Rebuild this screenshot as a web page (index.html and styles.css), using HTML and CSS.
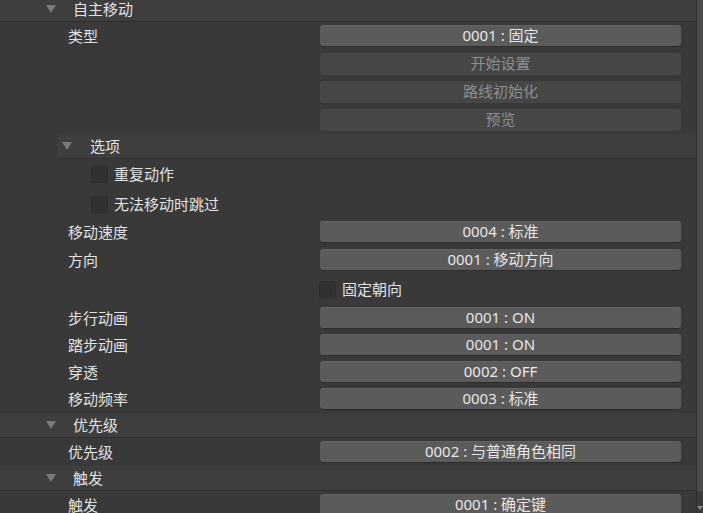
FILE: index.html
```html
<!DOCTYPE html>
<html lang="zh-CN">
  <head>
    <meta charset="UTF-8" />
    <meta name="viewport" content="width=device-width, initial-scale=1.0" />
    <title>事件属性</title>
    <link rel="stylesheet" href="styles.css">
  </head>
  <body>
    <div class="window">
      <div class="panel">
        <!-- 自主移动 -->
        <div class="group-head first"><span class="tri"></span><span>自主移动</span></div>

        <div class="row r-top"><span class="label">类型</span><button class="field">0001 : 固定</button></div>
        <div class="row"><span class="label"></span><button class="field off">开始设置</button></div>
        <div class="row"><span class="label"></span><button class="field off">路线初始化</button></div>
        <div class="row"><span class="label"></span><button class="field off">预览</button></div>

        <div class="group-head sub"><span class="tri"></span><span>选项</span></div>
        <div class="check-row c1"><span class="box"></span><span>重复动作</span></div>
        <div class="check-row c2"><span class="box"></span><span>无法移动时跳过</span></div>

        <div class="row r-speed"><span class="label">移动速度</span><button class="field">0004 : 标准</button></div>
        <div class="row"><span class="label">方向</span><button class="field">0001 : 移动方向</button></div>
        <div class="check-row c3"><span class="box"></span><span>固定朝向</span></div>
        <div class="row r-walk"><span class="label">步行动画</span><button class="field">0001 : ON</button></div>
        <div class="row tight"><span class="label">踏步动画</span><button class="field">0001 : ON</button></div>
        <div class="row tight"><span class="label">穿透</span><button class="field">0002 : OFF</button></div>
        <div class="row tight"><span class="label">移动频率</span><button class="field">0003 : 标准</button></div>

        <!-- 优先级 -->
        <div class="group-head"><span class="tri"></span><span>优先级</span></div>
        <div class="row r-top"><span class="label">优先级</span><button class="field">0002 : 与普通角色相同</button></div>

        <!-- 触发 -->
        <div class="group-head"><span class="tri"></span><span>触发</span></div>
        <div class="row r-top"><span class="label">触发</span><button class="field">0001 : 确定键</button></div>
      </div>

      <div class="scrollbar">
        <div class="thumb"></div>
        <span class="arrow"></span>
      </div>
    </div>
  </body>
</html>
```

FILE: styles.css
```css
html, body {
  margin: 0;
  height: 100%;
  overflow: hidden;
}

body {
  background-color: #393939;
  font-family: "Noto Sans", "Noto Sans CJK SC", sans-serif;
  font-size: 15px;
  color: #e2e2e2;
}

.window {
  display: flex;
  height: 513px;
}

.panel {
  width: 696px;
  border-right: 1px solid #2e2e2e;
  overflow: hidden;
}

.group-head {
  display: flex;
  align-items: center;
  height: 24px;
  margin-top: 3px;
  padding-left: 46px;
  background-color: #3e3e3e;
  border-bottom: 1px solid #2f2f2f;
  line-height: 22px;
}

.group-head.first {
  margin-top: -3px;
}

.group-head .tri {
  width: 0;
  height: 0;
  border-left: 5.5px solid transparent;
  border-right: 5.5px solid transparent;
  border-top: 8px solid #7a7a7a;
  margin-right: 17px;
}

.group-head.sub {
  margin-left: 58px;
  padding-left: 4px;
}

.group-head.sub .tri {
  border-left-width: 5px;
  border-right-width: 5px;
  margin-right: 18px;
}

.row {
  display: flex;
  align-items: center;
  height: 22px;
  margin-top: 6px;
}

.row.r-top {
  margin-top: 3px;
}

.row.r-speed {
  margin-top: 8px;
}

.row.r-walk {
  margin-top: 9px;
}

.row.tight {
  margin-top: 5px;
}

.label {
  width: 320px;
  padding-left: 68px;
  box-sizing: border-box;
  line-height: 20px;
}

.field {
  width: 361px;
  height: 22px;
  padding: 0 0 2px 0;
  border: none;
  border-radius: 3px;
  background-color: #5b5b5b;
  box-shadow: inset 0 -1px 0 #2c2c2c, inset 0 1px 0 #626262;
  color: #e6e6e6;
  font-family: inherit;
  font-size: 15px;
  line-height: 20px;
  text-align: center;
}

.field.off {
  background-color: #464646;
  box-shadow: none;
  color: #8e8e8e;
}

.check-row {
  display: flex;
  align-items: center;
  height: 17px;
  padding-left: 91px;
  line-height: 17px;
}

.check-row.c1 {
  margin-top: 7px;
}

.check-row.c2 {
  margin-top: 13px;
}

.check-row.c3 {
  margin-top: 10px;
  padding-left: 319px;
}

.box {
  width: 15px;
  height: 15px;
  margin-right: 6px;
  border: 1px solid #2d2d2d;
  border-radius: 2px;
  background-color: #313131;
}

.scrollbar {
  position: relative;
  width: 6px;
  background-color: #3a3a3a;
}

.thumb {
  height: 492px;
  background-color: #4c4c4c;
  border-radius: 0 0 3px 3px;
}

.arrow {
  position: absolute;
  right: 0;
  bottom: 3px;
  width: 0;
  height: 0;
  border-left: 3px solid transparent;
  border-right: 3px solid transparent;
  border-top: 4px solid #8a8a8a;
}
```
